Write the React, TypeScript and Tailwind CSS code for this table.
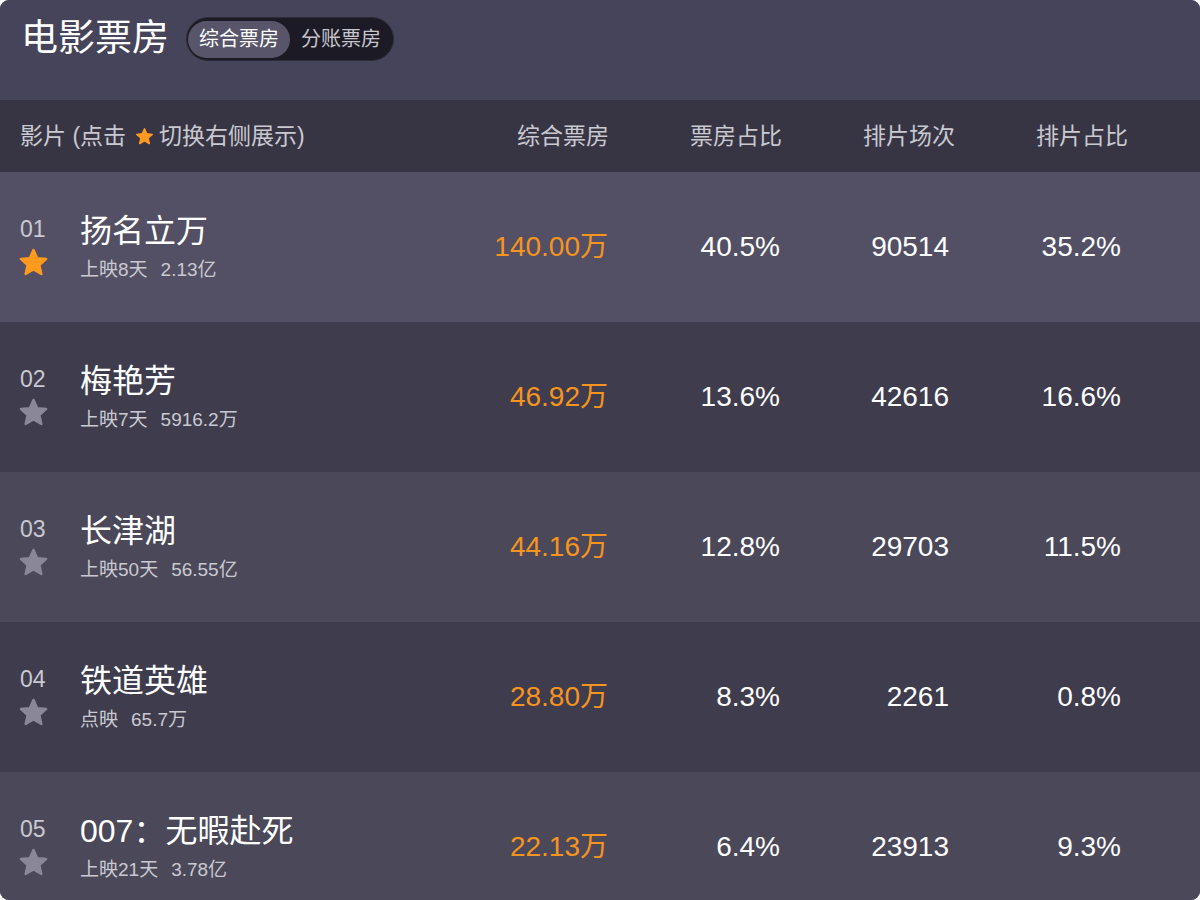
import React from "react";

const FONT = { fontFamily: '"Liberation Sans", "Noto Sans CJK SC", Arial, sans-serif' };

function Star({ color, size }: { color: string; size: number }) {
  return (
    <svg width={size} height={size} viewBox="0 0 24 24">
      <polygon
        points="12,2.2 14.9,8.6 21.8,9.3 16.6,14 18.1,20.9 12,17.4 5.9,20.9 7.4,14 2.2,9.3 9.1,8.6"
        fill={color}
        stroke={color}
        strokeWidth="1.8"
        strokeLinejoin="round"
      />
    </svg>
  );
}

type Row = {
  rank: string;
  title: string;
  days: string;
  total: string;
  box: string;
  ratio: string;
  shows: string;
  showRatio: string;
  bg: string;
  active?: boolean;
};

const rows: Row[] = [
  { rank: "01", title: "扬名立万", days: "上映8天", total: "2.13亿", box: "140.00万", ratio: "40.5%", shows: "90514", showRatio: "35.2%", bg: "bg-[#535065]", active: true },
  { rank: "02", title: "梅艳芳", days: "上映7天", total: "5916.2万", box: "46.92万", ratio: "13.6%", shows: "42616", showRatio: "16.6%", bg: "bg-[#3e3c4d]" },
  { rank: "03", title: "长津湖", days: "上映50天", total: "56.55亿", box: "44.16万", ratio: "12.8%", shows: "29703", showRatio: "11.5%", bg: "bg-[#4a4859]" },
  { rank: "04", title: "铁道英雄", days: "点映", total: "65.7万", box: "28.80万", ratio: "8.3%", shows: "2261", showRatio: "0.8%", bg: "bg-[#3e3c4d]" },
  { rank: "05", title: "007：无暇赴死", days: "上映21天", total: "3.78亿", box: "22.13万", ratio: "6.4%", shows: "23913", showRatio: "9.3%", bg: "bg-[#4a4859]" },
];

export default function App() {
  return (
    <div className="w-[1200px] h-[900px] bg-white" style={FONT}>
      <div className="w-full h-full rounded-[9px] overflow-hidden bg-[#46445a] flex flex-col">
        {/* Top bar */}
        <div className="h-[100px] shrink-0 flex items-start pt-[17px] pl-[21px] bg-[#46445a]">
          <div className="h-[44px] flex items-center text-[37px] leading-[44px] text-white">电影票房</div>
          <div className="ml-[17px] h-[44px] flex items-center rounded-full bg-[#1c1a24] border border-[#2e2c39] pl-[1px] pr-[1px]">
            <div className="h-[37px] flex items-center px-[11px] rounded-full bg-[#58556b] text-[20px] text-white">综合票房</div>
            <div className="h-[37px] flex items-center px-[11px] text-[20px] text-[#c6c5ce]">分账票房</div>
          </div>
        </div>

        {/* Column header */}
        <div className="h-[72px] shrink-0 bg-[#373544] flex items-center pr-[72px] text-[23px] text-[#cac9d1]">
          <div className="flex-1 pl-[20px] flex items-center">
            <span>影片 (点击</span>
            <span className="ml-[9px] mr-[5px] flex items-center">
              <Star color="#ff9a1f" size={19} />
            </span>
            <span>切换右侧展示)</span>
          </div>
          <div className="w-[173px] text-right">综合票房</div>
          <div className="w-[173px] text-right">票房占比</div>
          <div className="w-[173px] text-right">排片场次</div>
          <div className="w-[173px] text-right">排片占比</div>
        </div>

        {/* Rows */}
        {rows.map((r) => (
          <div key={r.rank} className={`h-[150px] shrink-0 flex items-center pr-[72px] ${r.bg}`}>
            <div className="flex-1 pl-[20px] flex items-center">
              <div className="w-[60px] flex flex-col items-start">
                <div className="text-[23px] leading-[26px] text-[#cac9d2]">{r.rank}</div>
                <div className="mt-[5px] -ml-[2px]">
                  <Star color={r.active ? "#ff9a1f" : "#8a8898"} size={31} />
                </div>
              </div>
              <div className="flex flex-col">
                <div className="text-[32px] leading-[36px] text-white">{r.title}</div>
                <div className="mt-[9px] text-[19px] leading-[24px] text-[#cac9d1] flex">
                  <span>{r.days}</span>
                  <span className="ml-[13px]">{r.total}</span>
                </div>
              </div>
            </div>
            <div className="w-[173px] text-right text-[28px] text-[#f7941d] pr-[1px]">{r.box}</div>
            <div className="w-[173px] text-right text-[28px] text-white pr-[2px]">{r.ratio}</div>
            <div className="w-[173px] text-right text-[28px] text-white pr-[6px]">{r.shows}</div>
            <div className="w-[173px] text-right text-[28px] text-white pr-[7px]">{r.showRatio}</div>
          </div>
        ))}
      </div>
    </div>
  );
}
